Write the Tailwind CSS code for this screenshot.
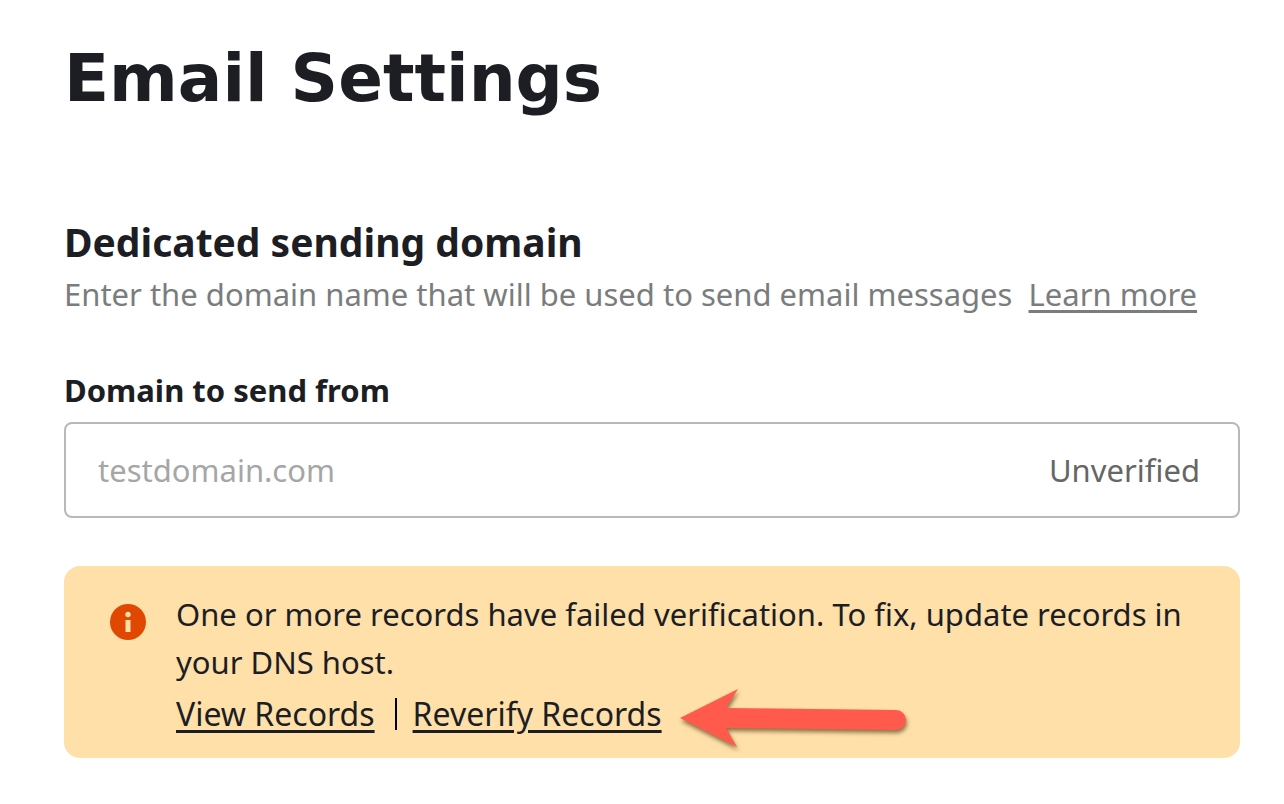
<!DOCTYPE html>
<html lang="en">
<head>
  <meta charset="UTF-8" />
  <meta name="viewport" content="width=device-width, initial-scale=1.0"/>
  <title>Email Settings</title>
  <script src="https://cdn.jsdelivr.net/npm/@tailwindcss/browser@4"></script>
</head>
<body class="bg-white text-[#1c1e24] font-['Noto_Sans',sans-serif] text-[31px] leading-[48px]">

  <main class="pl-16 pr-11 pt-9 pb-11">
    <h1 class="font-['DejaVu_Sans',sans-serif] text-[66px] leading-[86px] font-bold">Email Settings</h1>

    <section class="mt-[92px]">
      <h2 class="text-[39px] leading-[56px] font-bold">Dedicated sending domain</h2>
      <p class="text-[#7a7c7d]">
        Enter the domain name that will be used to send email messages
        <a href="#" class="ml-2 underline decoration-[3px] underline-offset-4">Learn more</a>
      </p>
    </section>

    <form class="mt-12">
      <label for="domain" class="block font-bold">Domain to send from</label>
      <div class="mt-2 flex items-center h-24 px-8 border-2 border-[#b9b9b9] rounded-lg">
        <input id="domain" type="text" placeholder="testdomain.com" class="flex-1 min-w-0 outline-none placeholder:text-[#a6a6a6]" />
        <span class="mr-1.5 text-[#666666]">Unverified</span>
      </div>
    </form>

    <div role="alert" class="mt-12 flex gap-[30px] pl-[46px] pr-12 pt-6 pb-5 bg-[#ffe0a9] rounded-2xl">
      <svg class="shrink-0 mt-[14px] w-9 h-9" viewBox="0 0 36 36" aria-hidden="true">
        <circle cx="18" cy="18" r="18" fill="#e04700"/>
        <circle cx="18" cy="10.5" r="2.7" fill="#ffe0a9"/>
        <rect x="15.5" y="16" width="5" height="12" fill="#ffe0a9"/>
      </svg>
      <div>
        <p>One or more records have failed verification. To fix, update records in your DNS host.</p>
        <div class="mt-1 flex items-center text-[32px]">
          <a href="#" class="underline decoration-[3px] underline-offset-4">View Records</a>
          <span class="ml-5 mr-4 w-[2px] h-8 bg-black"></span>
          <a href="#" class="underline decoration-[3px] underline-offset-4">Reverify Records</a>
          <!-- arrow pointing at the reverify link -->
          <svg class="ml-4 -my-2 shrink-0 w-[232px] h-16 overflow-visible drop-shadow-[1px_3px_2px_rgba(60,40,0,0.6)]" viewBox="0 0 232 64" aria-hidden="true">
            <path d="M2 36 L60 7 L48 26 L218 28 A10 10 0 0 1 218 48 L48 46 L59 65 Z" fill="#ff5a4c"/>
          </svg>
        </div>
      </div>
    </div>
  </main>

</body>
</html>
